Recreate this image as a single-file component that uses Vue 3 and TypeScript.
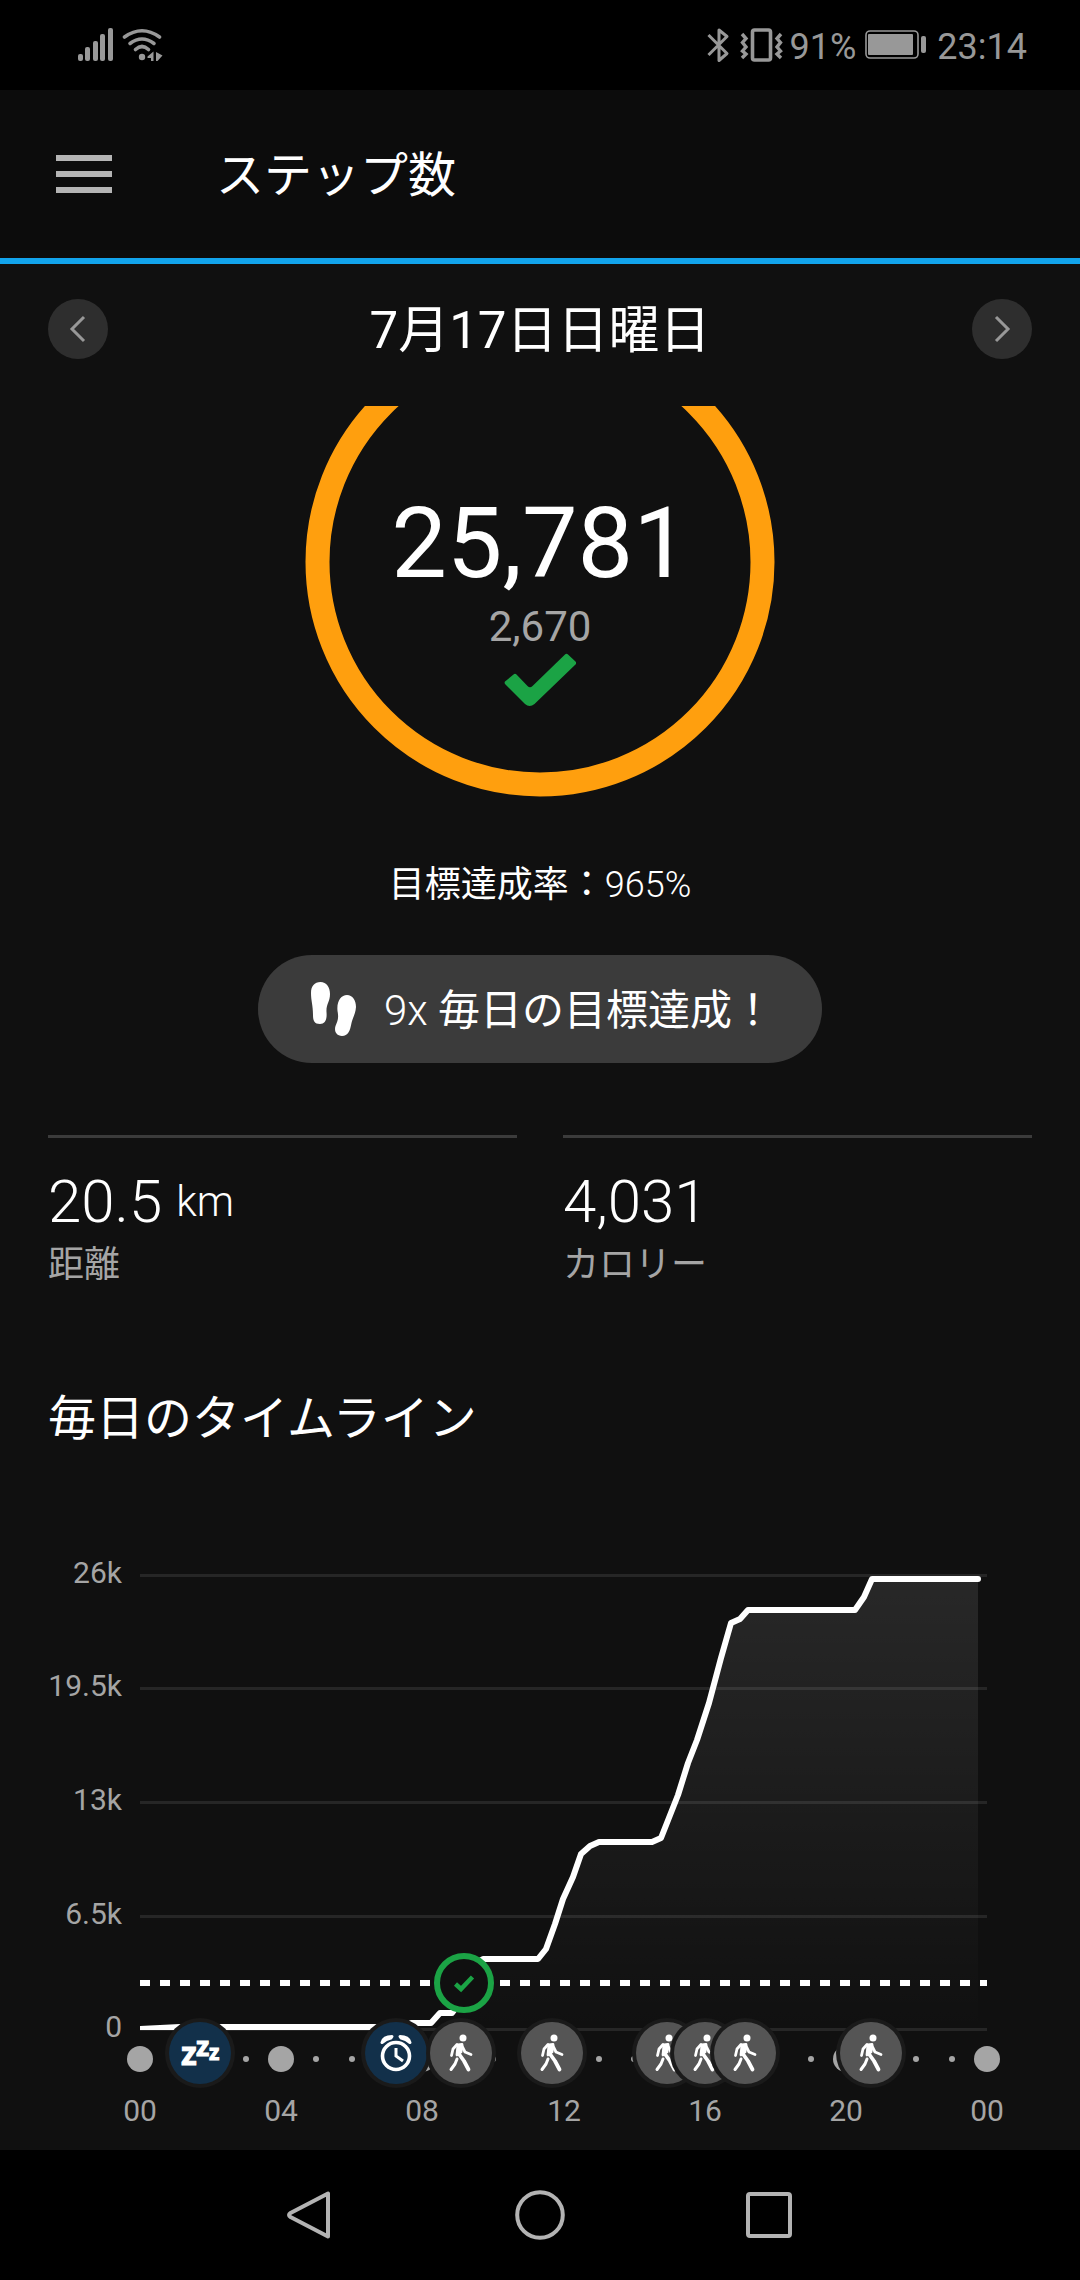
<script setup lang="ts">
interface Point { x: number; y: number }
interface TimelineEvent { x: number; kind: 'sleep' | 'alarm' | 'walk' }

const stats = [
  { value: '20.5', unit: 'km', label: '距離' },
  { value: '4,031', unit: '', label: 'カロリー' },
]

const plot = { left: 140, right: 987, hour: 847 / 24 }

const gridRows = [
  { label: '26k', y: 36 },
  { label: '19.5k', y: 149 },
  { label: '13k', y: 263 },
  { label: '6.5k', y: 377 },
  { label: '0', y: 490 },
]

const steps: Point[] = [
  { x: 140, y: 489 }, { x: 180, y: 487 }, { x: 404, y: 487 }, { x: 411, y: 483 },
  { x: 431, y: 483 }, { x: 440, y: 473 }, { x: 452, y: 473 }, { x: 462, y: 460 },
  { x: 474, y: 424 }, { x: 483, y: 419 }, { x: 538, y: 419 }, { x: 546, y: 409 },
  { x: 555, y: 384 }, { x: 563, y: 359 }, { x: 573, y: 337 }, { x: 581, y: 314 },
  { x: 590, y: 306 }, { x: 599, y: 302 }, { x: 652, y: 302 }, { x: 661, y: 298 },
  { x: 678, y: 255 }, { x: 688, y: 223 }, { x: 697, y: 200 }, { x: 709, y: 163 },
  { x: 721, y: 118 }, { x: 731, y: 83 }, { x: 740, y: 79 }, { x: 748, y: 70 },
  { x: 855, y: 70 }, { x: 864, y: 57 }, { x: 872, y: 39 }, { x: 978, y: 39 },
]
const linePoints = steps.map((p) => `${p.x},${p.y}`).join(' ')
const areaPoints = `140,490 ${linePoints} 978,490`

const hours = Array.from({ length: 25 }, (_, h) => ({
  h,
  x: Math.round(plot.left + h * plot.hour),
  major: h % 4 === 0,
  label: String(h % 24).padStart(2, '0'),
}))

const events: TimelineEvent[] = [
  { x: 200, kind: 'sleep' },
  { x: 396, kind: 'alarm' },
  { x: 461, kind: 'walk' },
  { x: 552, kind: 'walk' },
  { x: 667, kind: 'walk' },
  { x: 705, kind: 'walk' },
  { x: 745, kind: 'walk' },
  { x: 871, kind: 'walk' },
]
</script>

<template>
  <div class="screen">
    <div class="status">
      <div class="status-group">
        <svg width="85" height="34" viewBox="0 0 85 34" fill="#989898">
          <rect x="0" y="26" width="5" height="7" rx="2" />
          <rect x="7" y="19" width="5" height="14" rx="2" />
          <rect x="15" y="13" width="5" height="20" rx="2" />
          <rect x="22" y="6" width="5" height="27" rx="2" />
          <rect x="30" y="0" width="5" height="33" rx="2" />
          <g fill="none" stroke="#989898" stroke-width="3.6" stroke-linecap="round">
            <path d="M46.500 9Q64 -3.500 81.500 9" />
            <path d="M52 15.500Q64 6.500 76 15.500" />
            <path d="M57.500 21.500Q64 15.500 70.500 21.500" />
          </g>
          <circle cx="64" cy="29" r="3.200" />
          <path d="M69.500 28.500L75.500 23.500V33H73V30H69.500ZM78 24L84.500 27.500L79.500 33H78Z" />
        </svg>
      </div>
      <div class="status-group">
        <svg width="77" height="36" viewBox="0 0 77 36" fill="none" stroke="#989898">
          <path d="M1.500 8L20 26.500L12 33.500V3L20 9.500L1.500 28" stroke-width="3" stroke-linejoin="round" />
          <rect x="45.500" y="3" width="18" height="30" rx="2" stroke-width="3.600" />
          <path d="M35 7L39 11.500L35.500 15.500L39 20L35.500 24L39 27L35 31M74 7L70 11.500L73.500 15.500L70 20L73.500 24L70 27L74 31" stroke-width="3.400" />
        </svg>
        <span class="pct">91%</span>
        <svg class="battery" width="62" height="30" viewBox="0 0 62 30">
          <rect x="1" y="1" width="52" height="27" rx="4" fill="none" stroke="#989898" stroke-width="1.600" />
          <rect x="3" y="4" width="45" height="21" rx="1" fill="#989898" />
          <rect x="56" y="6" width="5" height="17" rx="2" fill="#989898" />
        </svg>
        <span>23:14</span>
      </div>
    </div>

    <header class="app-bar">
      <button class="menu" type="button" aria-label="メニュー"><i></i><i></i><i></i></button>
      <h1>ステップ数</h1>
    </header>

    <main>
      <div class="date-nav">
        <button type="button" aria-label="前日">
          <svg width="60" height="60" viewBox="0 0 60 60"><path d="M36 18L24 30L36 42" /></svg>
        </button>
        <h2>7月17日日曜日</h2>
        <button type="button" aria-label="翌日">
          <svg width="60" height="60" viewBox="0 0 60 60"><path d="M24 18L36 30L24 42" /></svg>
        </button>
      </div>

      <section class="gauge">
        <svg class="ring" width="470" height="391" viewBox="0 0 470 391">
          <circle cx="235" cy="156" r="222.500" fill="none" stroke="#ff9f0e" stroke-width="24" />
        </svg>
        <div class="reading">
          <strong>25,781</strong>
          <span>2,670</span>
          <svg width="72" height="54" viewBox="0 0 72 54">
            <path d="M1 28.500Q0 30 1.500 31.500L21 51Q25.500 55 30.500 51L71.500 11.500Q72.800 10 71.500 8.500L64 1.500Q62.500 0 61 1.500L28.500 33Q26 35.500 23.500 33L12.500 21.500Q11 20 9.500 21.500Z" fill="#1ba345" />
          </svg>
        </div>
      </section>

      <p class="rate">目標達成率：<span class="light">965%</span></p>

      <div class="badge">
        <svg width="54" height="56" viewBox="-4 0 54 56" fill="#fff">
          <path d="M10.500 1C16.500 1 20 6 20 13C20 21 16 23 16.500 31C17.200 39 15 43 10 43C4 43 3 39 3 34C3 24 1 20 1 12C1 5 4.500 1 10.500 1Z" />
          <path d="M37 14C42.500 14 46 19 46 26C45.500 33 43 36 41.500 42C40 50 38 55 32 55C26 55 24 50 25.500 45C27.500 40 29 38 27.500 30C26.500 20 31 14 37 14Z" />
        </svg>
        <p><span class="light">9x </span>毎日の目標達成！</p>
      </div>

      <dl class="stats">
        <div v-for="s in stats" :key="s.label">
          <dd>{{ s.value }}<small v-if="s.unit">{{ s.unit }}</small></dd>
          <dt>{{ s.label }}</dt>
        </div>
      </dl>

      <h2 class="timeline-title">毎日のタイムライン</h2>

      <svg class="chart" viewBox="0 0 1080 610" role="img" aria-label="毎日のタイムライン">
        <defs>
          <linearGradient id="fill" gradientUnits="userSpaceOnUse" x1="0" y1="39" x2="0" y2="490">
            <stop offset="0" stop-color="#fff" stop-opacity="0.1" />
            <stop offset="1" stop-color="#fff" stop-opacity="0" />
          </linearGradient>
          <clipPath id="above-axis"><rect x="140" y="0" width="860" height="490" /></clipPath>
        </defs>

        <g v-for="row in gridRows" :key="row.label">
          <rect class="grid-line" :x="plot.left" :y="row.y - 2" :width="plot.right - plot.left" height="3" />
          <text class="tick" x="122" :y="row.y + 7" text-anchor="end">{{ row.label }}</text>
        </g>

        <polygon :points="areaPoints" fill="url(#fill)" />
        <line :x1="plot.left" :x2="plot.right" y1="443" y2="443" stroke="#fff" stroke-width="6" stroke-dasharray="10 10" />
        <polyline class="curve" :points="linePoints" clip-path="url(#above-axis)" />

        <g v-for="t in hours" :key="t.h">
          <circle :cx="t.x" cy="519" :r="t.major ? 13 : 3" fill="#a5a5a5" />
          <text v-if="t.major" class="tick" :x="t.x" y="581" text-anchor="middle">{{ t.label }}</text>
        </g>

        <g transform="translate(464 443)">
          <circle r="27" fill="#101010" stroke="#1ba345" stroke-width="6" />
          <path d="M-8.500 1L-3 6L8.500 -6" fill="none" stroke="#1ba345" stroke-width="4.500" />
        </g>

        <g v-for="e in events" :key="e.x" :transform="`translate(${e.x} 513)`">
          <circle r="35" fill="#1a1a1a" />
          <circle r="31" :fill="e.kind === 'walk' ? '#555' : '#12304a'" />
          <g v-if="e.kind === 'sleep'" class="zzz">
            <text x="-19" y="12" font-size="32">z</text>
            <text x="-4" y="3" font-size="27">z</text>
            <text x="9" y="7" font-size="21">z</text>
          </g>
          <g v-else-if="e.kind === 'alarm'" fill="none" stroke="#fff">
            <circle cy="3" r="13.500" stroke-width="3.600" />
            <path d="M0 -5V3L7 8" stroke-width="3" />
            <path d="M-14 -10.500Q-12.500 -16.500 -4 -16.500L-5 -15Q-10 -14 -14 -10.500ZM14 -10.500Q12.500 -16.500 4 -16.500L5 -15Q10 -14 14 -10.500Z" fill="#fff" stroke-width="3" stroke-linejoin="round" />
          </g>
          <g v-else fill="none" stroke="#fff" stroke-linecap="round" stroke-linejoin="round">
            <circle cx="2" cy="-15" r="3.500" fill="#fff" stroke="none" />
            <path d="M-4 -8.500L-8 -4L-9.500 2.500" stroke-width="2.800" />
            <path d="M1 -7L4 -1L10 1.500" stroke-width="2.800" />
            <path d="M-3 -8L1 -8.500L0 -1L-4 2Z" fill="#fff" stroke-width="2.800" />
            <path d="M-2 1L3 8L7.500 16.500" stroke-width="3.800" />
            <path d="M-4 6L-6 11L-10 16.500" stroke-width="3" />
          </g>
        </g>
      </svg>
    </main>

    <nav class="system-nav">
      <button type="button" aria-label="戻る">
        <svg width="50" height="50" viewBox="0 0 50 50"><path d="M42 3.500V46.500L4.500 27Q1.500 25 4.500 23Z" /></svg>
      </button>
      <button type="button" aria-label="ホーム">
        <svg width="50" height="50" viewBox="0 0 50 50"><circle cx="25" cy="25" r="22.800" /></svg>
      </button>
      <button type="button" aria-label="履歴">
        <svg width="50" height="50" viewBox="0 0 50 50"><rect x="4" y="4" width="42" height="42" rx="2" /></svg>
      </button>
    </nav>
  </div>
</template>

<style>
body {
  margin: 0;
  background: #101010;
}
</style>

<style scoped>
.screen {
  display: flex;
  flex-direction: column;
  min-height: 100vh;
  background: #101010;
  color: #fff;
  font-family: Roboto, "Noto Sans CJK JP", sans-serif;
}
h1, h2, p, dl, dd, dt { margin: 0; font-weight: 400; }
svg { display: block; }
button {
  display: block;
  padding: 0;
  border: 0;
  background: none;
  cursor: pointer;
}
.light { font-weight: 300; }

.status {
  display: flex;
  align-items: center;
  justify-content: space-between;
  height: 90px;
  padding: 0 53px 0 78px;
  background: #000;
  color: #989898;
  font-size: 36px;
  line-height: 44px;
}
.status-group { display: flex; align-items: center; }
.status-group span { padding-top: 3px; }
.pct { margin-left: 6px; }
.battery { margin: 0 10px 0 9px; }

.app-bar {
  display: flex;
  align-items: center;
  gap: 104px;
  height: 168px;
  padding: 0 56px;
  border-bottom: 6px solid #12a4ec;
  background: #0c0c0c;
}
.menu {
  display: flex;
  flex-direction: column;
  gap: 10px;
  width: 56px;
}
.menu i { height: 6px; background: #b5b5b5; }
h1 { padding-top: 4px; font-size: 48px; line-height: 60px; }

main { display: flex; flex-direction: column; }
.date-nav {
  display: flex;
  align-items: center;
  justify-content: space-between;
  padding: 33px 48px 45px;
}
.date-nav h2 { padding-top: 4px; font-size: 51px; line-height: 60px; }
.date-nav button { border-radius: 50%; background: #2e2e2e; }
.date-nav path { fill: none; stroke: #989898; stroke-width: 3; }

.gauge {
  display: grid;
  justify-items: center;
}
.ring, .reading { grid-area: 1 / 1; }
.reading {
  display: flex;
  flex-direction: column;
  align-items: center;
  padding-top: 84px;
}
.reading strong { font-size: 99px; font-weight: 400; line-height: 106px; }
.reading span { margin-top: 5px; color: #a5a5a5; font-size: 42px; line-height: 52px; }

.rate {
  margin-top: 64px;
  font-size: 36px;
  line-height: 48px;
  text-align: center;
}
.badge {
  display: flex;
  align-items: center;
  align-self: center;
  gap: 24px;
  height: 108px;
  margin-top: 46px;
  padding: 0 48px;
  border-radius: 54px;
  background: #3b3b3b;
  font-size: 42px;
  line-height: 52px;
}
.badge p { padding-top: 3px; }
.stats {
  display: grid;
  grid-template-columns: 1fr 1fr;
  gap: 46px;
  margin: 72px 48px 0;
}
.stats div {
  display: flex;
  flex-direction: column;
  padding-top: 28px;
  border-top: 3px solid #3b3b3b;
}
.stats dd {
  display: flex;
  gap: 14px;
  font-size: 60px;
  font-weight: 300;
  line-height: 72px;
}
.stats small { font-size: 42px; }
.stats dt { margin-top: 3px; color: #a5a5a5; font-size: 36px; line-height: 48px; }

.timeline-title {
  margin: 100px 48px 0;
  font-size: 48px;
  line-height: 60px;
}
.chart { width: 100%; margin-top: 91px; }
.grid-line { fill: #262626; }
.tick { fill: #a5a5a5; font-size: 30px; }
.curve { fill: none; stroke: #fff; stroke-width: 6; stroke-linecap: round; stroke-linejoin: round; }
.zzz { fill: #fff; stroke: #fff; stroke-width: 1; font-family: "Noto Sans", sans-serif; font-weight: 700; }

.system-nav {
  display: flex;
  align-items: center;
  justify-content: center;
  gap: 179px;
  height: 130px;
  margin-top: auto;
  background: #000;
}
.system-nav svg { fill: none; stroke: #b3b3b3; stroke-width: 4; stroke-linejoin: round; }
</style>
